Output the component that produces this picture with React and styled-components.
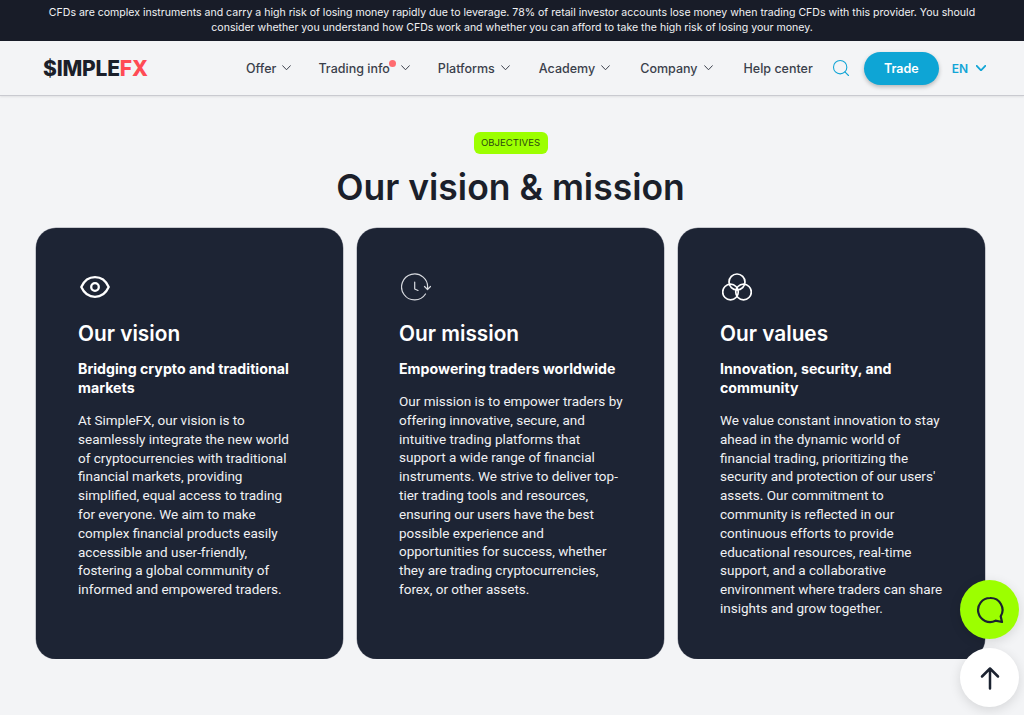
import styled, { createGlobalStyle } from "styled-components";
import { Search } from "lucide-react";

const GlobalStyle = createGlobalStyle`
	html, body {
		margin: 0;
		padding: 0;
		background: #f3f4f6;
		overflow: hidden;
	}
	* {
		box-sizing: border-box;
	}
`;

const navItems = [
	{ label: "Offer", space: 27, caret: true },
	{ label: "Trading info", space: 28, caret: true, dot: true },
	{ label: "Platforms", space: 29, caret: true },
	{ label: "Academy", space: 30, caret: true },
	{ label: "Company", space: 31, caret: true },
	{ label: "Help center", space: 0 },
];

const cards = [
	{
		icon: <EyeIcon />,
		title: "Our vision",
		subtitle: "Bridging crypto and traditional markets",
		textWidth: 222,
		text: "At SimpleFX, our vision is to seamlessly integrate the new world of cryptocurrencies with traditional financial markets, providing simplified, equal access to trading for everyone. We aim to make complex financial products easily accessible and user-friendly, fostering a global community of informed and empowered traders.",
	},
	{
		icon: <ClockIcon />,
		title: "Our mission",
		subtitle: "Empowering traders worldwide",
		textWidth: 225,
		text: "Our mission is to empower traders by offering innovative, secure, and intuitive trading platforms that support a wide range of financial instruments. We strive to deliver top-tier trading tools and resources, ensuring our users have the best possible experience and opportunities for success, whether they are trading cryptocurrencies, forex, or other assets.",
	},
	{
		icon: <CirclesIcon />,
		title: "Our values",
		subtitle: "Innovation, security, and community",
		textWidth: 225,
		text: "We value constant innovation to stay ahead in the dynamic world of financial trading, prioritizing the security and protection of our users' assets. Our commitment to community is reflected in our continuous efforts to provide educational resources, real-time support, and a collaborative environment where traders can share insights and grow together.",
	},
];

function Caret({ width = 9, stroke = 1.1 }) {
	return (
		<svg width={width} height={width * 0.62} viewBox="0 0 10 6.200" fill="none" stroke="currentColor" strokeWidth={stroke} strokeLinecap="round" strokeLinejoin="round">
			<path d="M.7.8 5 5.300 9.300.8" />
		</svg>
	);
}

function EyeIcon() {
	return (
		<svg width="30" height="22" viewBox="0 0 30 22" fill="none" stroke="#fff" strokeWidth="2.300">
			<path d="M1.300 11C4 5 9 1.200 15 1.200S26 5 28.700 11C26 17 21 20.800 15 20.800S4 17 1.300 11Z" strokeLinejoin="round" />
			<circle cx="15" cy="11" r="3.800" />
		</svg>
	);
}

function ClockIcon() {
	return (
		<svg width="30" height="28" viewBox="0 0 30 28" fill="none" stroke="#d8dadf" strokeWidth="1.200" strokeLinecap="round" strokeLinejoin="round">
			<path d="M24.500 21A13 13 0 1 1 26.500 15.500" />
			<path d="M13.700 9v7l3.300 1.500" />
			<path d="M23.500 13.500l3 3 3-3" />
		</svg>
	);
}

function CirclesIcon() {
	return (
		<svg width="30" height="28" viewBox="0 0 30 28" fill="none" stroke="#fff" strokeWidth="1.700">
			<circle cx="15" cy="9" r="8" />
			<circle cx="8.500" cy="19" r="7.800" />
			<circle cx="21.500" cy="19" r="7.800" />
		</svg>
	);
}

function ChatIcon() {
	return (
		<svg width="30" height="30" viewBox="0 0 30 30" fill="none" stroke="#1b2230" strokeWidth="2.200" strokeLinejoin="round">
			<path d="M15 3a12 12 0 1 0 5.500 22.700L27 27l-1.300-5.700A12 12 0 0 0 15 3Z" />
		</svg>
	);
}

function UpArrow() {
	return (
		<svg width="20" height="24" viewBox="0 0 20 24" fill="none" stroke="#1b2230" strokeWidth="2.500" strokeLinecap="round" strokeLinejoin="round">
			<path d="M10 22.500V2.500M2 10.500l8-8 8 8" />
		</svg>
	);
}

export default function App() {
	return (
		<>
			<GlobalStyle />
			<Banner>
				CFDs are complex instruments and carry a high risk of losing money rapidly due to leverage. 78% of retail
				investor accounts lose money when trading CFDs with this provider. You should consider whether you
				understand how CFDs work and whether you can afford to take the high risk of losing your money.
			</Banner>
			<Header>
				<Logo>
					$IMPLE<span>FX</span>
				</Logo>
				<Nav>
					{navItems.map((item) => (
						<NavItem key={item.label} $space={item.space}>
							{item.label}
							{item.dot && <Dot />}
							{item.caret && (
								<CaretSlot $wide={item.dot}>
									<Caret />
								</CaretSlot>
							)}
						</NavItem>
					))}
				</Nav>
				<SearchButton>
					<Search size={20} strokeWidth={1.3} />
				</SearchButton>
				<TradeButton>Trade</TradeButton>
				<Lang>
					EN <Caret width={10} stroke={1.8} />
				</Lang>
			</Header>
			<Main>
				<Tag>OBJECTIVES</Tag>
				<Heading>Our vision &amp; mission</Heading>
				<Cards>
					{cards.map((card) => (
						<Card key={card.title}>
							<IconSlot>{card.icon}</IconSlot>
							<CardTitle>{card.title}</CardTitle>
							<CardSubtitle>{card.subtitle}</CardSubtitle>
							<CardText $width={card.textWidth}>{card.text}</CardText>
						</Card>
					))}
				</Cards>
			</Main>
			<Floating>
				<RoundButton $bg="#9cff00">
					<ChatIcon />
				</RoundButton>
				<RoundButton $bg="#fff">
					<UpArrow />
				</RoundButton>
			</Floating>
		</>
	);
}

const Banner = styled.div`
	height: 41px;
	background: #181c28;
	color: #f1f2f4;
	font-family: "Inter", sans-serif;
	font-size: 10.560px;
	line-height: 15px;
	text-align: center;
	padding: 5px 40px 0;
`;

const Header = styled.header`
	height: 55px;
	background: #f3f4f6;
	border-bottom: 1px solid #c9cad0;
	box-shadow: 0 1px 2px rgba(0, 0, 0, 0.08);
	display: flex;
	align-items: center;
	padding: 0 0 0 43px;
	font-family: "Inter", sans-serif;
`;

const Logo = styled.div`
	flex-shrink: 0;
	width: 203px;
	font-size: 21px;
	font-weight: 800;
	color: #1b1f2a;
	letter-spacing: -0.2px;

	span {
		color: #ff4b55;
	}
`;

const Nav = styled.nav`
	display: flex;
	align-items: center;
	flex-shrink: 0;
`;

const NavItem = styled.div`
	display: flex;
	align-items: center;
	position: relative;
	white-space: nowrap;
	margin-right: ${(p) => p.$space}px;
	font-size: 12.500px;
	font-weight: 500;
	color: #3a3f4b;
`;

const CaretSlot = styled.span`
	display: flex;
	margin-left: ${(p) => (p.$wide ? 11 : 6)}px;
`;

const Dot = styled.span`
	position: absolute;
	width: 7px;
	height: 7px;
	border-radius: 50%;
	background: #ff6b70;
	left: 71px;
	top: -1px;
`;

const SearchButton = styled.div`
	display: flex;
	flex-shrink: 0;
	color: #12a5d6;
	margin-left: 18px;
`;

const TradeButton = styled.button`
	flex-shrink: 0;
	width: 75px;
	height: 33px;
	margin-left: 13px;
	border: none;
	border-radius: 17px;
	background: #0ea5d5;
	color: #fff;
	font-family: "Inter", sans-serif;
	font-size: 12.500px;
	font-weight: 600;
	box-shadow: 0 2px 4px rgba(0, 0, 0, 0.25);
`;

const Lang = styled.div`
	display: flex;
	align-items: center;
	flex-shrink: 0;
	margin-left: 13px;
	gap: 8px;
	color: #12a5d6;
	font-size: 12px;
	font-weight: 600;
`;

const Main = styled.main`
	display: flex;
	flex-direction: column;
	align-items: center;
	padding: 36px 3px 0 0;
`;

const Tag = styled.div`
	height: 22px;
	width: 74px;
	border-radius: 6px;
	background: #9cff00;
	color: #2c4a10;
	font-family: "Inter", sans-serif;
	font-size: 9.600px;
	line-height: 22px;
	text-align: center;
`;

const Heading = styled.h1`
	margin: 14px 0 20px;
	font-family: "Inter", sans-serif;
	font-size: 35.500px;
	font-weight: 600;
	line-height: 40px;
	color: #1b1f2a;
`;

const Cards = styled.section`
	align-self: flex-start;
	margin-left: 36px;
	display: grid;
	grid-template-columns: repeat(3, 307px);
	gap: 14px;
`;

const Card = styled.article`
	height: 431px;
	border-radius: 20px;
	background: #1d2434;
	box-shadow: 0 0 0 0.5px #9a9ca6;
	color: #fff;
	padding: 44px 36px 0 42px;
`;

const IconSlot = styled.div`
	height: 30px;
	padding-left: 2px;
	display: flex;
	align-items: center;
`;

const CardTitle = styled.h2`
	margin: 17px 0 0;
	font-family: "Inter", sans-serif;
	font-size: 20.800px;
	font-weight: 600;
	line-height: 30px;
`;

const CardSubtitle = styled.h3`
	margin: 10px 0 0;
	font-family: "Inter", sans-serif;
	font-size: 14.200px;
	font-weight: 700;
	line-height: 19px;
`;

const CardText = styled.p`
	width: ${(p) => p.$width}px;
	margin: 14px 0 0;
	font-family: "Roboto", sans-serif;
	font-size: 13.500px;
	line-height: 18.800px;
	color: #f0f1f3;
`;

const Floating = styled.div`
	position: fixed;
	right: 5px;
	bottom: 8px;
	display: flex;
	flex-direction: column;
	gap: 9px;
`;

const RoundButton = styled.div`
	width: 59px;
	height: 59px;
	border-radius: 50%;
	background: ${(p) => p.$bg};
	display: flex;
	align-items: center;
	justify-content: center;
	box-shadow: 0 3px 12px rgba(0, 0, 0, 0.12);
`;
